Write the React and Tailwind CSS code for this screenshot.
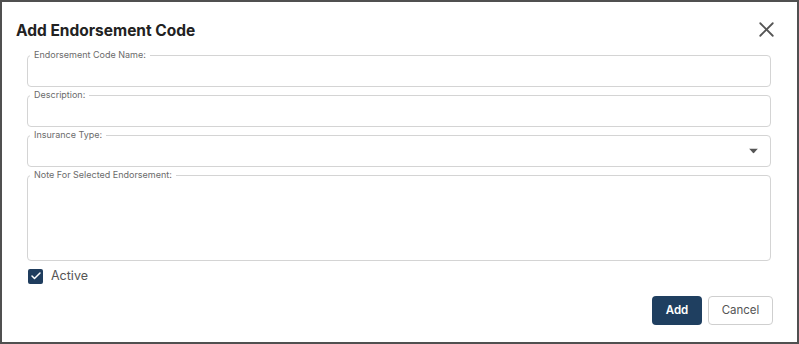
import { X, Check } from "lucide-react";

const FONT = { fontFamily: "Inter, 'Noto Sans', 'Liberation Sans', sans-serif" };

function OutlinedField({ label, height, select }) {
    return (
        <div className={`relative rounded-[4px] border border-[#d4d4d4] ${height}`}>
            <span className="absolute -top-[7px] left-[2px] bg-white px-[4px] text-[9px] leading-[12px] text-[#6b6b6b]">
                {label}
            </span>
            {select && (
                <svg
                    className="absolute right-[12px] top-1/2 -translate-y-1/2"
                    width="9"
                    height="5"
                    viewBox="0 0 9 5"
                >
                    <path d="M0 0 L9 0 L4.5 5 Z" fill="#555" />
                </svg>
            )}
        </div>
    );
}

export default function App() {
    return (
        <div
            className="w-[799px] h-[344px] border-2 border-[#505050] bg-white flex flex-col"
            style={FONT}
        >
            {/* Header */}
            <div className="flex items-center justify-between pt-[17px] pl-[14px] pr-[18px]">
                <h2 className="text-[15.5px] leading-[22px] font-bold text-[#222]">
                    Add Endorsement Code
                </h2>
                <X size={25} strokeWidth={1.7} className="text-[#555] -mt-[2px]" />
            </div>

            {/* Fields */}
            <div className="flex flex-col gap-[8px] mt-[13px] pl-[25px] pr-[26px]">
                <OutlinedField label="Endorsement Code Name:" height="h-[32px]" />
                <OutlinedField label="Description:" height="h-[32px]" />
                <OutlinedField label="Insurance Type:" height="h-[32px]" select />
                <OutlinedField label="Note For Selected Endorsement:" height="h-[86px]" />
            </div>

            {/* Active */}
            <div className="flex items-center gap-[8px] mt-[6px] pl-[26px]">
                <span className="w-[15px] h-[15px] rounded-[2px] bg-[#1f3d5e] flex items-center justify-center">
                    <Check size={12} strokeWidth={3} className="text-white" />
                </span>
                <span className="text-[12.5px] text-[#555]">Active</span>
            </div>

            {/* Actions */}
            <div className="flex justify-end gap-[6px] mt-[10px] pr-[24px]">
                <button className="w-[50px] h-[29px] rounded-[4px] bg-[#1f3f60] text-white text-[11.5px] font-semibold">
                    Add
                </button>
                <button className="w-[65px] h-[29px] rounded-[4px] border border-[#cfcfcf] bg-white text-[#555] text-[11.5px]">
                    Cancel
                </button>
            </div>
        </div>
    );
}
